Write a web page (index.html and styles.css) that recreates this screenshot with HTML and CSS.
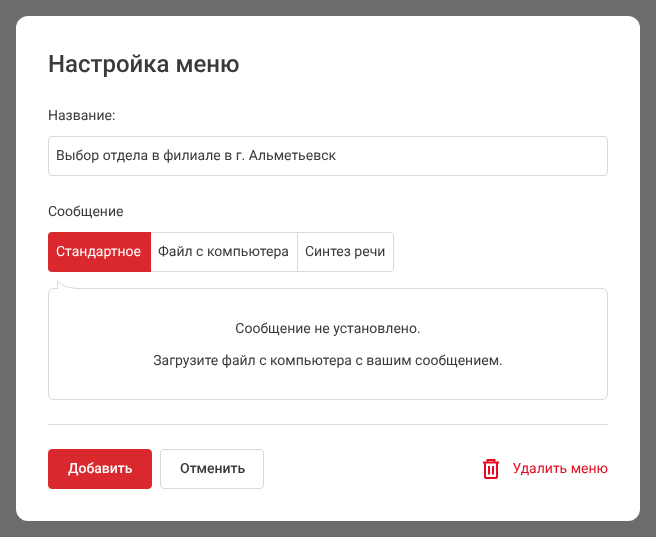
FILE: index.html
```html
<!DOCTYPE html>
<html lang="ru">
<head>
<meta charset="utf-8">
<title>Настройка меню</title>
<link rel="stylesheet" href="styles.css">
</head>
<body>
<div class="modal">
  <h1 class="title">Настройка меню</h1>
  <label class="label">Название:</label>
  <div class="input">Выбор отдела в филиале в г. Альметьевск</div>
  <div class="label label-msg">Сообщение</div>
  <div class="tabs">
    <div class="tab tab-active">Стандартное</div>
    <div class="tab tab-next">Файл с компьютера</div>
    <div class="tab">Синтез речи</div>
  </div>
  <div class="bubble">
    <svg class="tail" width="24" height="10" viewBox="0 0 24 10"><path d="M.5 9V.5C3 4 9 8.5 23 8.5V9z" fill="#fff"/><path d="M.5 9V.5C3 4 9 8.5 23 8.5" fill="none" stroke="#d9d9d9"/></svg>
    <p class="msg">Сообщение не установлено.</p>
    <p class="msg">Загрузите файл с компьютера с вашим сообщением.</p>
  </div>
  <div class="footer">
    <button class="btn btn-primary">Добавить</button>
    <button class="btn btn-secondary">Отменить</button>
    <a class="delete">
      <svg class="trash" width="16" height="20" viewBox="0 0 16 20" fill="none" stroke="#e30b23" stroke-width="2"><path d="M0 3.5h16"/><path d="M4.5 3V1h7v2"/><path d="M2 3.5V18a1 1 0 0 0 1 1h10a1 1 0 0 0 1-1V3.5"/><path d="M6 7v8.5M10 7v8.5"/></svg>
      <span>Удалить меню</span>
    </a>
  </div>
</div>
</body>
</html>
```
FILE: styles.css
```css
* { box-sizing: border-box; }
html, body { margin: 0; height: 100%; }
body {
  background: #6b6d6c;
  padding: 16px;
  font-family: Roboto, "Liberation Sans", sans-serif;
  font-size: 14px;
  color: #3a3a3a;
  overflow: hidden;
  text-rendering: geometricPrecision;
}
.modal {
  width: 624px;
  height: 505px;
  background: #fff;
  border-radius: 12px;
  padding: 32px;
  will-change: transform;
}
.title {
  margin: 0;
  font-size: 24px;
  line-height: 32px;
  font-weight: 500;
  color: #3a3a3a;
}
.label {
  display: block;
  margin-top: 28px;
  line-height: 16px;
  height: 28px;
}
.label-msg { margin-top: 28px; }
.input {
  height: 40px;
  border: 1px solid #d9d9d9;
  border-radius: 4px;
  padding: 0 7px;
  line-height: 38px;
}
.tabs {
  display: inline-flex;
  vertical-align: top;
  height: 40px;
  border: 1px solid #d9d9d9;
  border-radius: 4px;
}
.tab {
  padding: 0 8px 0 7px;
  line-height: 38px;
  border-left: 1px solid #d9d9d9;
}
.tab:first-child { border-left: 0; }
.tab-next { border-left: 0; }
.tab-active {
  margin: -1px 0 -1px -1px;
  padding: 0 10px 0 8px;
  line-height: 40px;
  background: #d9292f;
  color: #fff;
  border-radius: 4px 0 0 4px;
}
.bubble {
  position: relative;
  margin-top: 16px;
  height: 112px;
  border: 1px solid #d9d9d9;
  border-radius: 6px;
  padding-top: 32px;
  text-align: center;
}
.tail {
  position: absolute;
  left: 8px;
  top: -9px;
}
.msg {
  margin: 0 0 16px;
  line-height: 16px;
}
.footer {
  display: flex;
  align-items: center;
  gap: 8px;
  margin-top: 24px;
  padding-top: 24px;
  border-top: 1px solid #d9d9d9;
}
.btn {
  height: 40px;
  border-radius: 4px;
  font: 500 14px Roboto, "Liberation Sans", sans-serif;
  text-rendering: geometricPrecision;
  padding: 0 19px;
}
.btn-primary {
  width: 104px;
  background: #d9292f;
  border: 1px solid #d9292f;
  color: #fff;
}
.btn-secondary {
  width: 104px;
  background: #fff;
  border: 1px solid #d9d9d9;
  color: #3a3a3a;
}
.delete {
  display: flex;
  align-items: center;
  gap: 13px;
  margin-left: auto;
  color: #e30b23;
}
```
